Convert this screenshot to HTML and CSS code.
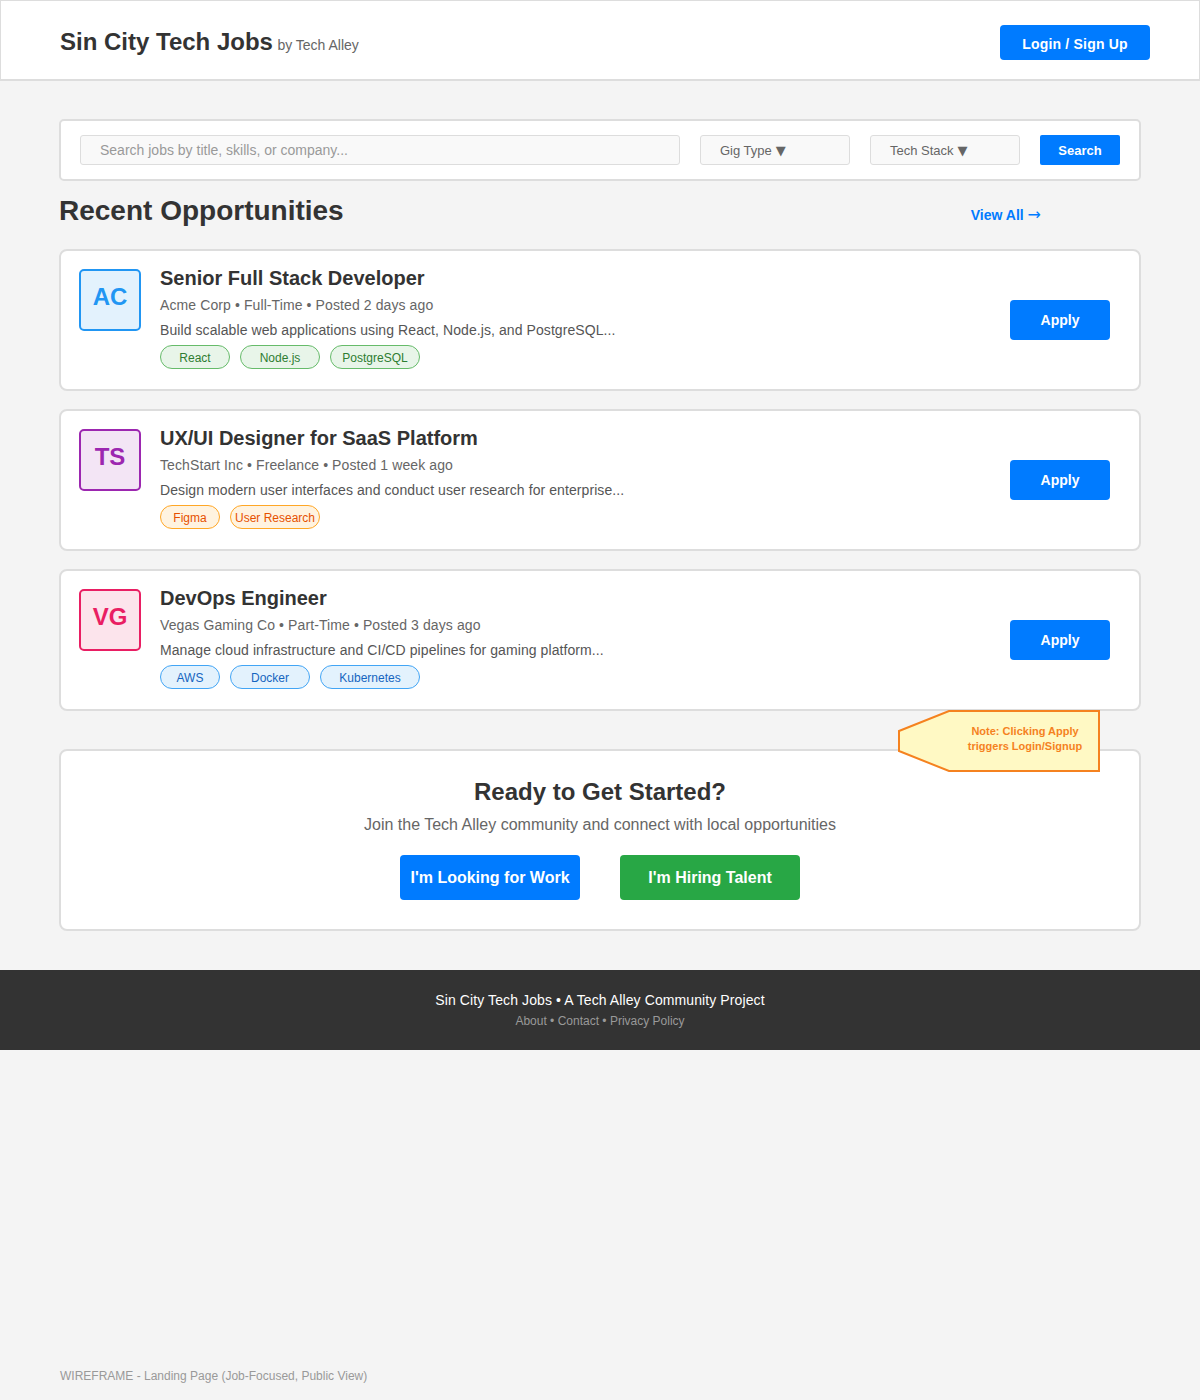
FILE: index.html
```html
<!DOCTYPE html>
<html lang="en">
<head>
<meta charset="utf-8">
<title>Sin City Tech Jobs</title>
<link rel="stylesheet" href="styles.css">
</head>
<body>
<header class="header">
  <div class="brand"><span class="brand-name">Sin City Tech Jobs</span> <span class="brand-by">by Tech Alley</span></div>
  <a class="btn-login">Login / Sign Up</a>
</header>

<main class="main">
  <div class="search-bar">
    <div class="field field-search">Search jobs by title, skills, or company...</div>
    <div class="field field-select">Gig Type <span class="caret">▼</span></div>
    <div class="field field-select">Tech Stack <span class="caret">▼</span></div>
    <a class="btn-search">Search</a>
  </div>

  <div class="section-head">
    <h2 class="section-title">Recent Opportunities</h2>
    <a class="view-all">View All <span class="arrow">→</span></a>
  </div>

  <div class="jobs">
    <div class="job-card">
      <div class="logo logo-blue">AC</div>
      <div class="job-info">
        <div class="job-title">Senior Full Stack Developer</div>
        <div class="job-meta">Acme Corp • Full-Time • Posted 2 days ago</div>
        <div class="job-desc">Build scalable web applications using React, Node.js, and PostgreSQL...</div>
        <div class="tags">
          <span class="tag tag-green w70">React</span>
          <span class="tag tag-green w80">Node.js</span>
          <span class="tag tag-green w90">PostgreSQL</span>
        </div>
      </div>
      <a class="btn-apply">Apply</a>
    </div>

    <div class="job-card">
      <div class="logo logo-purple">TS</div>
      <div class="job-info">
        <div class="job-title">UX/UI Designer for SaaS Platform</div>
        <div class="job-meta">TechStart Inc • Freelance • Posted 1 week ago</div>
        <div class="job-desc">Design modern user interfaces and conduct user research for enterprise...</div>
        <div class="tags">
          <span class="tag tag-orange w60">Figma</span>
          <span class="tag tag-orange w90">User Research</span>
        </div>
      </div>
      <a class="btn-apply">Apply</a>
    </div>

    <div class="job-card">
      <div class="logo logo-pink">VG</div>
      <div class="job-info">
        <div class="job-title">DevOps Engineer</div>
        <div class="job-meta">Vegas Gaming Co • Part-Time • Posted 3 days ago</div>
        <div class="job-desc">Manage cloud infrastructure and CI/CD pipelines for gaming platform...</div>
        <div class="tags">
          <span class="tag tag-blue w60">AWS</span>
          <span class="tag tag-blue w80">Docker</span>
          <span class="tag tag-blue w100">Kubernetes</span>
        </div>
      </div>
      <a class="btn-apply">Apply</a>
    </div>
  </div>

  <div class="cta">
    <div class="note">
      <svg class="note-shape" width="204" height="64" viewBox="-2 -2 204 64">
        <polygon points="0,20 50,0 200,0 200,60 50,60 0,40" fill="#fff9c4" stroke="#f5821f" stroke-width="2"/>
      </svg>
      <div class="note-text">Note: Clicking Apply<br>triggers Login/Signup</div>
    </div>
    <h3 class="cta-title">Ready to Get Started?</h3>
    <p class="cta-sub">Join the Tech Alley community and connect with local opportunities</p>
    <div class="cta-actions">
      <a class="btn-cta btn-work">I'm Looking for Work</a>
      <a class="btn-cta btn-hire">I'm Hiring Talent</a>
    </div>
  </div>
</main>

<footer class="footer">
  <div class="footer-main">Sin City Tech Jobs • A Tech Alley Community Project</div>
  <div class="footer-links">About • Contact • Privacy Policy</div>
</footer>

<div class="wire-label">WIREFRAME - Landing Page (Job-Focused, Public View)</div>
</body>
</html>
```

FILE: styles.css
```css
* { box-sizing: border-box; }

html, body {
  margin: 0;
  padding: 0;
}

body {
  background: #f4f4f4;
  font-family: "Liberation Sans", Arial, sans-serif;
  color: #333;
  width: 1200px;
  height: 1400px;
}

a { text-decoration: none; }

/* Header */
.header {
  display: flex;
  align-items: flex-start;
  justify-content: space-between;
  height: 81px;
  background: #fff;
  border: 1px solid #ddd;
  border-bottom-width: 2px;
  padding: 0 49px 0 59px;
}

.brand {
  margin-top: 27px;
  line-height: 28px;
  white-space: nowrap;
}

.brand-name {
  font-size: 24px;
  font-weight: bold;
  color: #333;
}

.brand-by {
  font-size: 14px;
  color: #666;
}

.btn-login {
  margin-top: 24px;
  width: 150px;
  height: 35px;
  background: #007bff;
  color: #fff;
  border-radius: 4px;
  font-size: 14px;
  font-weight: bold;
  letter-spacing: 0.2px;
  display: flex;
  align-items: center;
  justify-content: center;
  padding-top: 3px;
}

/* Main */
.main {
  padding: 0 59px;
}

.search-bar {
  margin-top: 38px;
  height: 62px;
  background: #fff;
  border: 2px solid #ddd;
  border-radius: 5px;
  display: flex;
  align-items: flex-start;
  gap: 20px;
  padding: 14px 0 0 19px;
}

.field {
  height: 30px;
  background: #f9f9f9;
  border: 1px solid #ddd;
  border-radius: 3px;
  display: flex;
  align-items: center;
  padding-left: 19px;
  white-space: nowrap;
}

.field-search {
  width: 600px;
  font-size: 14px;
  color: #999;
}

.field-select {
  width: 150px;
  font-size: 13px;
  color: #666;
}

.caret {
  font-family: "DejaVu Sans", sans-serif;
  font-size: 13px;
  margin-left: 4px;
  color: #666;
}

.btn-search {
  width: 80px;
  height: 30px;
  background: #007bff;
  color: #fff;
  border-radius: 2px;
  font-size: 13px;
  font-weight: bold;
  display: flex;
  align-items: center;
  justify-content: center;
}

.section-head {
  display: flex;
  align-items: baseline;
  margin-top: 14px;
}

.section-title {
  margin: 0;
  font-size: 28px;
  line-height: 32px;
  font-weight: bold;
  color: #333;
}

.view-all {
  margin-left: auto;
  margin-right: 100px;
  font-size: 14px;
  font-weight: bold;
  color: #007bff;
}

.arrow {
  font-family: "DejaVu Sans", sans-serif;
  font-weight: normal;
  font-size: 16px;
}

/* Job cards */
.jobs {
  margin-top: 22px;
  display: flex;
  flex-direction: column;
  gap: 18px;
}

.job-card {
  height: 142px;
  background: #fff;
  border: 2px solid #ddd;
  border-radius: 8px;
  display: flex;
  align-items: flex-start;
  padding: 15px 29px 0 18px;
}

.logo {
  flex: none;
  width: 62px;
  height: 62px;
  margin-top: 3px;
  border: 2px solid;
  border-radius: 5px;
  display: flex;
  align-items: center;
  justify-content: center;
  font-size: 24px;
  line-height: 24px;
  font-weight: bold;
  padding-bottom: 6px;
}

.logo-blue { border-color: #2196f3; background: #e3f2fd; color: #2196f3; }
.logo-purple { border-color: #9c27b0; background: #f3e5f5; color: #9c27b0; }
.logo-pink { border-color: #e91e63; background: #fce4ec; color: #e91e63; }

.job-info {
  margin-left: 19px;
  display: flex;
  flex-direction: column;
}

.job-title {
  font-size: 20px;
  line-height: 24px;
  font-weight: bold;
  color: #333;
}

.job-meta {
  margin-top: 5px;
  font-size: 14px;
  line-height: 20px;
  color: #666;
  letter-spacing: 0.1px;
}

.job-desc {
  margin-top: 5px;
  font-size: 14px;
  line-height: 20px;
  color: #555;
  letter-spacing: 0.08px;
}

.tags {
  margin-top: 5px;
  display: flex;
  gap: 10px;
}

.tag {
  height: 24px;
  border: 1px solid;
  border-radius: 12px;
  font-size: 12px;
  display: flex;
  align-items: center;
  justify-content: center;
  padding-top: 1px;
  white-space: nowrap;
}

.w60 { width: 60px; }
.w70 { width: 70px; }
.w80 { width: 80px; }
.w90 { width: 90px; }
.w100 { width: 100px; }

.tag-green { background: #e8f5e9; border-color: #66bb6a; color: #2e7d32; }
.tag-orange { background: #fff3e0; border-color: #ffa726; color: #e65100; }
.tag-blue { background: #e3f2fd; border-color: #42a5f5; color: #1565c0; }

.btn-apply {
  margin-left: auto;
  align-self: center;
  margin-top: -15px;
  width: 100px;
  height: 40px;
  background: #007bff;
  color: #fff;
  border-radius: 4px;
  font-size: 14px;
  font-weight: bold;
  display: flex;
  align-items: center;
  justify-content: center;
}

/* CTA */
.cta {
  position: relative;
  margin-top: 38px;
  height: 182px;
  background: #fff;
  border: 2px solid #ddd;
  border-radius: 8px;
  padding-top: 27px;
  text-align: center;
}

.note {
  position: absolute;
  top: -42px;
  right: 38px;
  width: 204px;
  height: 64px;
}

.note-shape {
  position: absolute;
  left: 0;
  top: 0;
}

.note-text {
  position: absolute;
  left: 53px;
  top: 15px;
  width: 150px;
  font-size: 11px;
  line-height: 15px;
  font-weight: bold;
  color: #f5821f;
  text-align: center;
}

.cta-title {
  margin: 0;
  font-size: 24px;
  line-height: 28px;
  font-weight: bold;
  color: #333;
}

.cta-sub {
  margin: 9px 0 0;
  font-size: 16px;
  line-height: 20px;
  color: #666;
}

.cta-actions {
  margin-top: 20px;
  display: flex;
  justify-content: center;
  gap: 40px;
}

.btn-cta {
  width: 180px;
  height: 45px;
  border-radius: 4px;
  color: #fff;
  font-size: 16px;
  font-weight: bold;
  display: flex;
  align-items: center;
  justify-content: center;
}

.btn-work { background: #007bff; }
.btn-hire { background: #28a745; }

/* Footer */
.footer {
  margin-top: 39px;
  height: 80px;
  background: #333;
  text-align: center;
  padding-top: 21px;
}

.footer-main {
  font-size: 14px;
  line-height: 18px;
  color: #fff;
  letter-spacing: 0.1px;
}

.footer-links {
  margin-top: 5px;
  font-size: 12px;
  line-height: 14px;
  color: #999;
}

.wire-label {
  margin: 319px 0 0 60px;
  font-size: 12px;
  line-height: 14px;
  color: #999;
}
```
